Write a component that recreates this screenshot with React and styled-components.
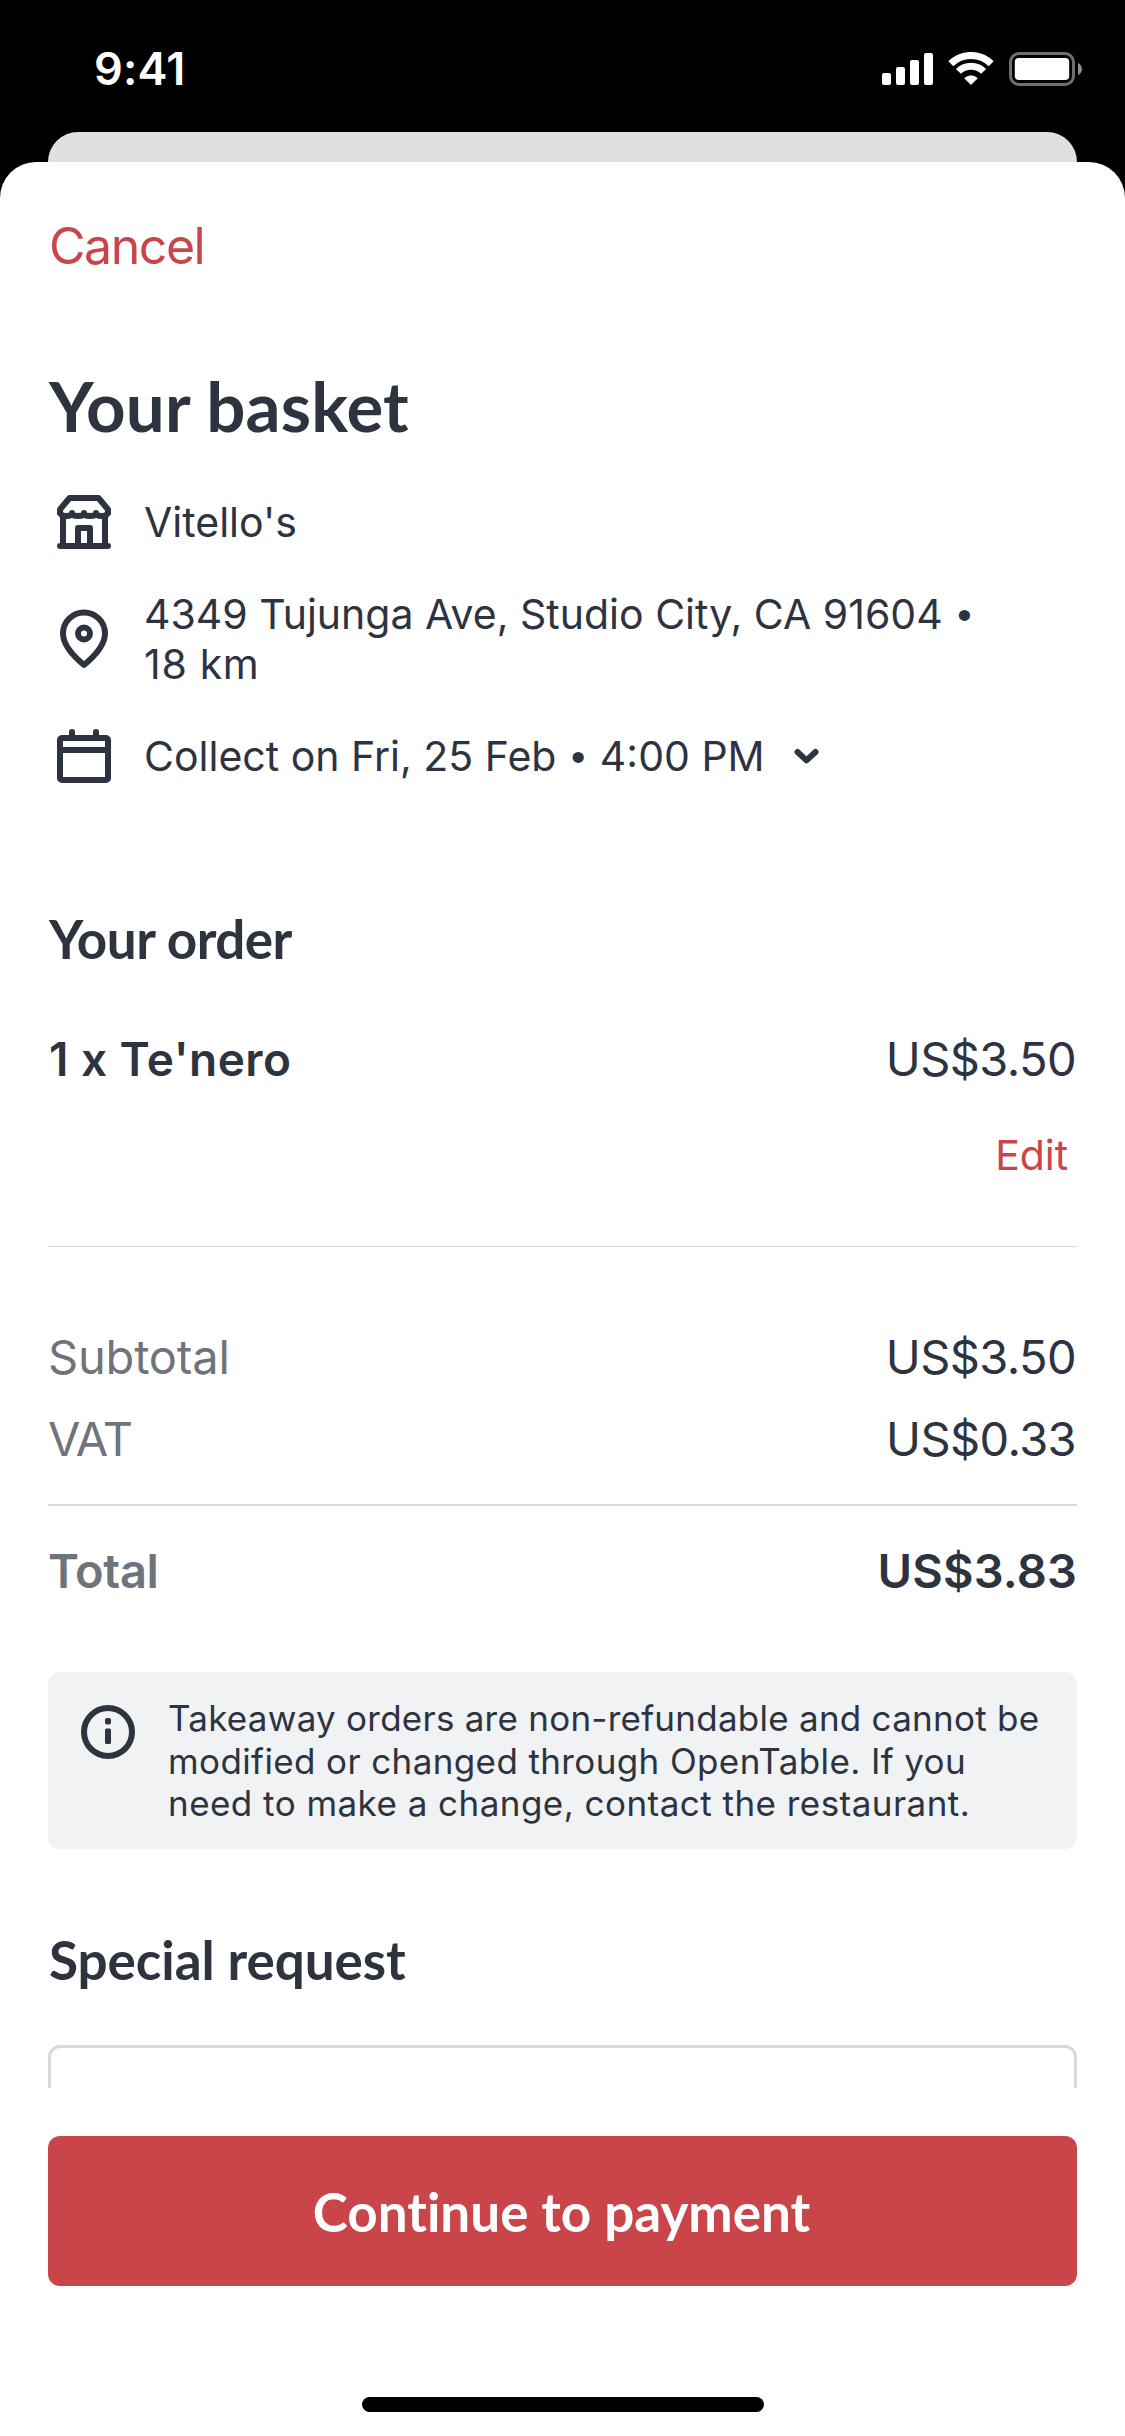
import styled, { createGlobalStyle } from "styled-components"

const INK = "#2d333f"
const RED = "#c94549"
const GREY = "#6f737b"
const LINE = "#d8d9db"

const GlobalStyle = createGlobalStyle`
*{
    box-sizing:border-box;
}
body{
    margin:0;
    background:black;
    font-family:Inter, "Liberation Sans", sans-serif;
    color:${INK};
}
h1,h2,p{
    margin:0;
}
button{
    border:none;
    background:none;
    padding:0;
    font-family:inherit;
    cursor:pointer;
}
svg{
    display:block;
    flex-shrink:0;
}
`
const Phone = styled.div`
width:1125px;
height:2436px;
display:flex;
flex-direction:column;
overflow:hidden;
background:black;
`
const StatusBar = styled.header`
height:132px;
padding:47px 43px 0 94px;
display:flex;
justify-content:space-between;
align-items:flex-start;
color:white;
`
const Clock = styled.span`
font-size:45px;
line-height:44px;
font-weight:600;
letter-spacing:.2px;
`
const StatusIcons = styled.div`
display:flex;
gap:15px;
padding-top:5px;
`
const BackCard = styled.div`
height:30px;
flex-shrink:0;
margin:0 48px;
background:#e0e0e0;
border-radius:30px 30px 0 0;
`
const Sheet = styled.main`
flex:1;
min-height:0;
display:flex;
flex-direction:column;
background:white;
border-radius:36px 36px 0 0;
`
const Content = styled.div`
flex:1;
min-height:0;
overflow:hidden;
padding:54px 48px 0;
`
const CancelButton = styled.button`
display:block;
color:${RED};
font-size:50px;
line-height:60px;
letter-spacing:-1.45px;
padding-left:1px;
`
const Title = styled.h1`
margin-top:88px;
padding-left:1px;
font-family:Lato, sans-serif;
font-weight:700;
font-size:69px;
line-height:84px;
letter-spacing:.15px;
`
const Details = styled.div`
margin-top:38px;
display:flex;
flex-direction:column;
gap:31px;
`
const DetailRow = styled.div`
display:flex;
align-items:center;
gap:24px;
`
const DetailText = styled.p`
font-size:41px;
line-height:50px;
`
const Distance = styled.span`
display:block;
letter-spacing:.7px;
`
const Bullet = styled.span`
font-family:"Liberation Sans", sans-serif;
line-height:0;
margin:0 3px;
`
const TimePicker = styled.button`
display:flex;
align-items:center;
gap:29px;
color:inherit;
`
const SectionTitle = styled.h2`
margin-top:${(props) => props.$top}px;
padding-left:1px;
font-family:Lato, sans-serif;
font-weight:700;
font-size:53px;
line-height:64px;
letter-spacing:${(props) => props.$spacing}px;
`
const PriceRow = styled.div`
display:flex;
justify-content:space-between;
font-size:47px;
line-height:60px;
`
const OrderItem = styled(PriceRow)`
margin-top:58px;
`
const ItemName = styled.span`
padding-left:1px;
font-size:46px;
font-weight:600;
letter-spacing:.45px;
`
const Price = styled.span`
padding-right:1px;
letter-spacing:-.6px;
`
const TotalPrice = styled.span`
font-weight:600;
letter-spacing:.15px;
`
const Label = styled.span`
color:${GREY};
font-weight:${(props) => (props.$bold ? 600 : 400)};
letter-spacing:${(props) => props.$spacing}px;
`
const EditButton = styled.button`
display:block;
margin:41px 9px 0 auto;
color:${RED};
font-size:41px;
line-height:50px;
letter-spacing:-.1px;
`
const Divider = styled.hr`
border:none;
margin:${(props) => props.$top}px 0 0;
height:${(props) => props.$thick}px;
background:${LINE};
`
const Fees = styled.div`
margin-top:80px;
display:flex;
flex-direction:column;
gap:22px;
`
const TotalRow = styled(PriceRow)`
margin-top:35px;
`
const Notice = styled.div`
margin-top:71px;
height:177px;
padding:24px;
display:flex;
gap:24px;
background:#f1f2f4;
border-radius:12px;
`
const NoticeText = styled.p`
padding-top:1px;
font-size:35px;
line-height:42.5px;
white-space:nowrap;
`
const NoticeLine = styled.span`
display:block;
letter-spacing:${(props) => props.$spacing}px;
`
const RequestInput = styled.textarea`
display:block;
width:100%;
height:300px;
margin-top:53px;
border:3px solid ${LINE};
border-radius:12px;
background:white;
resize:none;
outline:none;
`
const Footer = styled.footer`
height:348px;
padding:48px 48px 24px;
display:flex;
flex-direction:column;
justify-content:space-between;
align-items:center;
`
const PayButton = styled.button`
width:100%;
height:150px;
padding:2px 2px 0 0;
border-radius:12px;
background:${RED};
color:white;
font-family:Lato, sans-serif;
font-weight:700;
font-size:53px;
line-height:64px;
font-variant-ligatures:none;
`
const HomeIndicator = styled.div`
width:402px;
height:15px;
border-radius:8px;
background:black;
`

function SignalIcon(){
    return(
        <svg width="51" height="34" viewBox="0 0 51 34" fill="white">
            <rect x="0" y="21" width="9" height="12" rx="2"/>
            <rect x="14" y="15" width="9" height="18" rx="2"/>
            <rect x="28" y="8" width="9" height="25" rx="2"/>
            <rect x="42" y="1" width="9" height="32" rx="2"/>
        </svg>
    )
}
function WifiIcon(){
    return(
        <svg width="46" height="34" viewBox="0 0 46 34" fill="none" stroke="white" strokeWidth="7">
            <path d="M2.8 11.8A28.5 28.5 0 0 1 43.2 11.8"/>
            <path d="M10.4 19.4A17.8 17.8 0 0 1 35.6 19.4"/>
            <path d="M23 32.6L16.7 26.3A9.3 9.3 0 0 1 29.3 26.3Z" fill="white" stroke="white" strokeWidth=".8" strokeLinejoin="round"/>
        </svg>
    )
}
function BatteryIcon(){
    return(
        <svg width="73" height="34" viewBox="0 0 73 34">
            <rect x="1.5" y="1.5" width="63" height="31" rx="8.5" fill="none" stroke="#6c6f77" strokeWidth="3"/>
            <rect x="5.8" y="6" width="54.4" height="22" rx="4" fill="white"/>
            <path d="M69 11C74.3 13 74.3 21 69 23Z" fill="#8d8f94"/>
        </svg>
    )
}
const Icon = styled.svg.attrs({ viewBox: "0 0 72 72", fill: "none", stroke: INK, strokeWidth: 6 })`
width:72px;
height:72px;
stroke-linecap:round;
stroke-linejoin:round;
`
function StoreIcon(){
    return(
        <Icon>
            <path d="M12 27V23.5L21.5 12H50.5L60 23.5V27"/>
            <path d="M12 26Q12.5 30 18 30Q24 30 24 27Q24 30 30 30Q36 30 36 27Q36 30 42 30Q48 30 48 27Q48 30 54 30Q59.5 30 60 26"/>
            <path d="M15 30V60M57 30V60M12 60H60"/>
            <path d="M30 60V42H42V60"/>
        </Icon>
    )
}
function PinIcon(){
    return(
        <Icon>
            <path d="M36 62C27 54.5 15 42 15 30.5A21 21 0 0 1 57 30.5C57 42 45 54.5 36 62Z"/>
            <circle cx="36" cy="30.5" r="6"/>
        </Icon>
    )
}
function CalendarIcon(){
    return(
        <Icon>
            <rect x="12" y="18" width="48" height="42" rx="2"/>
            <path d="M12 30H60M24 12V18M48 12V18"/>
        </Icon>
    )
}
function InfoIcon(){
    return(
        <Icon>
            <circle cx="36" cy="36" r="24"/>
            <rect x="33" y="22" width="6" height="6.6" rx="2" fill={INK} stroke="none"/>
            <rect x="33" y="32.6" width="6" height="15.4" rx="1.5" fill={INK} stroke="none"/>
        </Icon>
    )
}
function ChevronIcon(){
    return(
        <svg width="25" height="18" viewBox="0 0 25 18" fill="none" stroke={INK} strokeWidth="6" strokeLinecap="round" strokeLinejoin="round">
            <path d="M3.5 5L12.5 13.4L21.5 5"/>
        </svg>
    )
}

export default function App(){
    return(
        <Phone>
            <GlobalStyle />
            <StatusBar>
                <Clock>9:41</Clock>
                <StatusIcons>
                    <SignalIcon />
                    <WifiIcon />
                    <BatteryIcon />
                </StatusIcons>
            </StatusBar>
            <BackCard />
            <Sheet>
                <Content>
                    <CancelButton>Cancel</CancelButton>
                    <Title>Your basket</Title>
                    <Details>
                        <DetailRow>
                            <StoreIcon />
                            <DetailText>Vitello's</DetailText>
                        </DetailRow>
                        <DetailRow>
                            <PinIcon />
                            <DetailText>
                                4349 Tujunga Ave, Studio City, CA 91604 <Bullet>•</Bullet>
                                <Distance>18 km</Distance>
                            </DetailText>
                        </DetailRow>
                        <DetailRow>
                            <CalendarIcon />
                            <TimePicker>
                                <DetailText>Collect on Fri, 25 Feb <Bullet>•</Bullet> 4:00 PM</DetailText>
                                <ChevronIcon />
                            </TimePicker>
                        </DetailRow>
                    </Details>

                    <SectionTitle $top={115} $spacing={-.5}>Your order</SectionTitle>
                    <OrderItem>
                        <ItemName>1 x Te'nero</ItemName>
                        <Price>US$3.50</Price>
                    </OrderItem>
                    <EditButton>Edit</EditButton>
                    <Divider $top={66} $thick={1}/>

                    <Fees>
                        <PriceRow>
                            <Label $spacing={-.2}>Subtotal</Label>
                            <Price>US$3.50</Price>
                        </PriceRow>
                        <PriceRow>
                            <Label $spacing={-1.4}>VAT</Label>
                            <Price>US$0.33</Price>
                        </PriceRow>
                    </Fees>
                    <Divider $top={35} $thick={2}/>
                    <TotalRow>
                        <Label $bold $spacing={-.3}>Total</Label>
                        <TotalPrice>US$3.83</TotalPrice>
                    </TotalRow>

                    <Notice>
                        <InfoIcon />
                        <NoticeText>
                            <NoticeLine $spacing={.25}>Takeaway orders are non-refundable and cannot be</NoticeLine>
                            <NoticeLine $spacing={.38}>modified or changed through OpenTable. If you</NoticeLine>
                            <NoticeLine $spacing={.46}>need to make a change, contact the restaurant.</NoticeLine>
                        </NoticeText>
                    </Notice>

                    <SectionTitle $top={79} $spacing={-.05}>Special request</SectionTitle>
                    <RequestInput />
                </Content>
                <Footer>
                    <PayButton>Continue to payment</PayButton>
                    <HomeIndicator />
                </Footer>
            </Sheet>
        </Phone>
    )
}
